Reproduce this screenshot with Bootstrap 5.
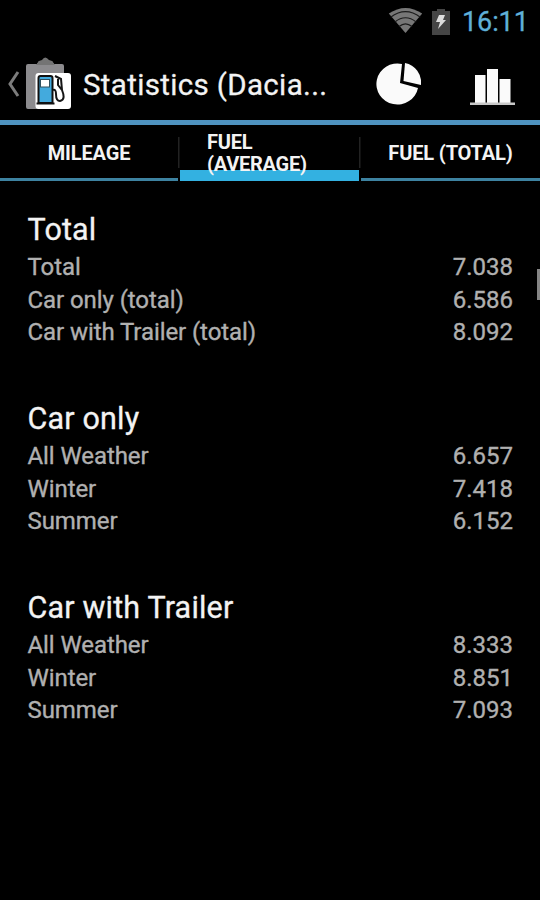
<!DOCTYPE html>
<html lang="en">
<head>
<meta charset="utf-8">
<meta name="viewport" content="width=device-width, initial-scale=1">
<title>Statistics</title>
<link href="https://cdn.jsdelivr.net/npm/bootstrap@5.3.0/dist/css/bootstrap.min.css" rel="stylesheet">
<style>
body{background:#000;color:#f3f3f3;font-family:Roboto,sans-serif;height:900px;overflow:hidden}
svg{display:block;flex:none}
.status-bar{height:45px;padding:0 11px 3px 0}
.clock{color:#5fb0d8;font-size:27px;line-height:42px;letter-spacing:-.1px;width:67px;margin-left:12px;padding-top:1px;-webkit-text-stroke:.3px #5fb0d8}
.battery{margin-left:9px}
.action-bar{height:75px;padding:0 25px 0 6px}
.app-title{font-size:29.5px;line-height:40px;margin-left:11px;width:293px;letter-spacing:.34px;padding-top:4px;-webkit-text-stroke:.3px #f3f3f3}
.pie-icon{margin-top:2px}
.bars-icon{margin-top:9px}
.tab-strip{height:61px;border-top:5px solid #4f93c0}
.tab-strip .nav-link{position:relative;height:56px;padding:2px 0 0;color:#f3f3f3;font-weight:700;font-size:20px;line-height:22px;letter-spacing:-.15px;border-bottom:3px solid #3d82a0;border-radius:0;flex:0 0 179px}
.tab-strip .nav-link:first-child{flex-basis:178px}
.tab-strip .tab-active{border-bottom:11px solid #33b1e1;padding:0 0 0 27px;letter-spacing:-.25px}
.tab-active span{position:relative;z-index:1;margin-bottom:-11px}
.tab-gap{width:2px;height:31px;background:linear-gradient(90deg,#222 1px,#111 1px);margin-top:12px}
main{padding-top:29px}
.stat-group{height:189px;padding:0 27px 0 27.500px}
.stat-group h2{font-size:30.5px;font-weight:400;line-height:40px;margin:0 0 1px;letter-spacing:.17px;-webkit-text-stroke:.3px #f3f3f3}
.stat-row{font-size:24px;line-height:32.700px;color:#b0b0b0;-webkit-text-stroke:.35px #b0b0b0}
.stat-row span:first-child{letter-spacing:-.08px}
.scroll-thumb{position:absolute;right:0;top:269px;width:3px;height:31px;background:#858585}
</style>
<script src="https://cdn.jsdelivr.net/npm/bootstrap@5.3.0/dist/js/bootstrap.bundle.min.js"></script>
</head>
<body>
<div class="status-bar d-flex align-items-center justify-content-end">
  <svg width="35" height="26" viewBox="0 0 36 28"><path d="M0 6Q18-6 36 6L18 27Z" fill="#777"/><path d="M2 10Q18-2 34 10M6.500 15Q18 6 29.500 15M11 20Q18 14 25 20" fill="none" stroke="#1c1c1c" stroke-width="1.300"/></svg>
  <svg class="battery" width="18" height="27" viewBox="0 0 18 27"><path d="M0 3h5V1h8v2h5v24H0Z" fill="#454545"/><path d="M7 7h6l-2 5h3L6 21l2-7H4Z" fill="#ddd"/></svg>
  <div class="clock">16:11</div>
</div>
<div class="action-bar d-flex align-items-center">
  <svg width="66" height="54" viewBox="0 0 66 54"><path d="M12 16 4 28 12 40" fill="none" stroke="#7c7c7c" stroke-width="3"/>
    <path d="M22 8h9l2-3h3q3-4 7 0h3l2 3h8q2 0 2 2v41q0 2-2 2H22q-2 0-2-2V10q0-2 2-2Z" fill="#8c8b8e"/><path d="M33 5l3-1q3-5 7 0l3 1 3 4H30Z" fill="#747474"/>
    <rect x="29.500" y="17" width="35.500" height="36" rx="3" fill="#fff"/>
    <path d="M32.500 47V22q0-2 2-2h10q2 0 2 2v25Z" fill="#43aadd" stroke="#111" stroke-width="2"/><path d="M30.500 47.500h18" stroke="#111" stroke-width="2"/><rect x="34.500" y="23.500" width="9" height="7.500" fill="#fff" stroke="#30515f"/>
    <path d="M47 34q3-1 3 4c0 5 1 7 4 7 5-1 4-6 2-11M49 20l6 3 1 11-4-5V23" fill="none" stroke="#151515" stroke-width="2"/></svg>
  <div class="app-title text-nowrap">Statistics (Dacia...</div>
  <svg class="pie-icon" width="45" height="42" viewBox="0 0 45 42"><path d="M26 1A21 20.500 0 1 0 42 25L24 20Z" fill="#fafafa"/><path d="M29 0A20 20 0 0 1 45 22L27.500 18Z" fill="#fafafa"/></svg>
  <svg class="bars-icon ms-auto" width="45" height="38" viewBox="0 0 45 38"><path d="M5 7h10.500v28H5ZM17 1h11v34H17ZM29.500 11h11v24h-11Z" fill="#fafafa"/><path d="M0 34.500h45v2.500H0Z" fill="#c8c8c8"/></svg>
</div>
<nav class="tab-strip nav flex-nowrap">
  <a class="nav-link d-flex align-items-center justify-content-center" href="#"><span>MILEAGE</span></a>
  <div class="tab-gap"></div>
  <a class="nav-link tab-active d-flex align-items-center" href="#"><span>FUEL<br>(AVERAGE)</span></a>
  <div class="tab-gap"></div>
  <a class="nav-link d-flex align-items-center justify-content-center" href="#"><span>FUEL (TOTAL)</span></a>
</nav>
<main>
  <section class="stat-group"><h2>Total</h2>
    <div class="stat-row d-flex justify-content-between"><span>Total</span><span>7.038</span></div>
    <div class="stat-row d-flex justify-content-between"><span>Car only (total)</span><span>6.586</span></div>
    <div class="stat-row d-flex justify-content-between"><span>Car with Trailer (total)</span><span>8.092</span></div>
  </section>
  <section class="stat-group"><h2>Car only</h2>
    <div class="stat-row d-flex justify-content-between"><span>All Weather</span><span>6.657</span></div>
    <div class="stat-row d-flex justify-content-between"><span>Winter</span><span>7.418</span></div>
    <div class="stat-row d-flex justify-content-between"><span>Summer</span><span>6.152</span></div>
  </section>
  <section class="stat-group"><h2>Car with Trailer</h2>
    <div class="stat-row d-flex justify-content-between"><span>All Weather</span><span>8.333</span></div>
    <div class="stat-row d-flex justify-content-between"><span>Winter</span><span>8.851</span></div>
    <div class="stat-row d-flex justify-content-between"><span>Summer</span><span>7.093</span></div>
  </section>
</main>
<div class="scroll-thumb"></div>
</body>
</html>
